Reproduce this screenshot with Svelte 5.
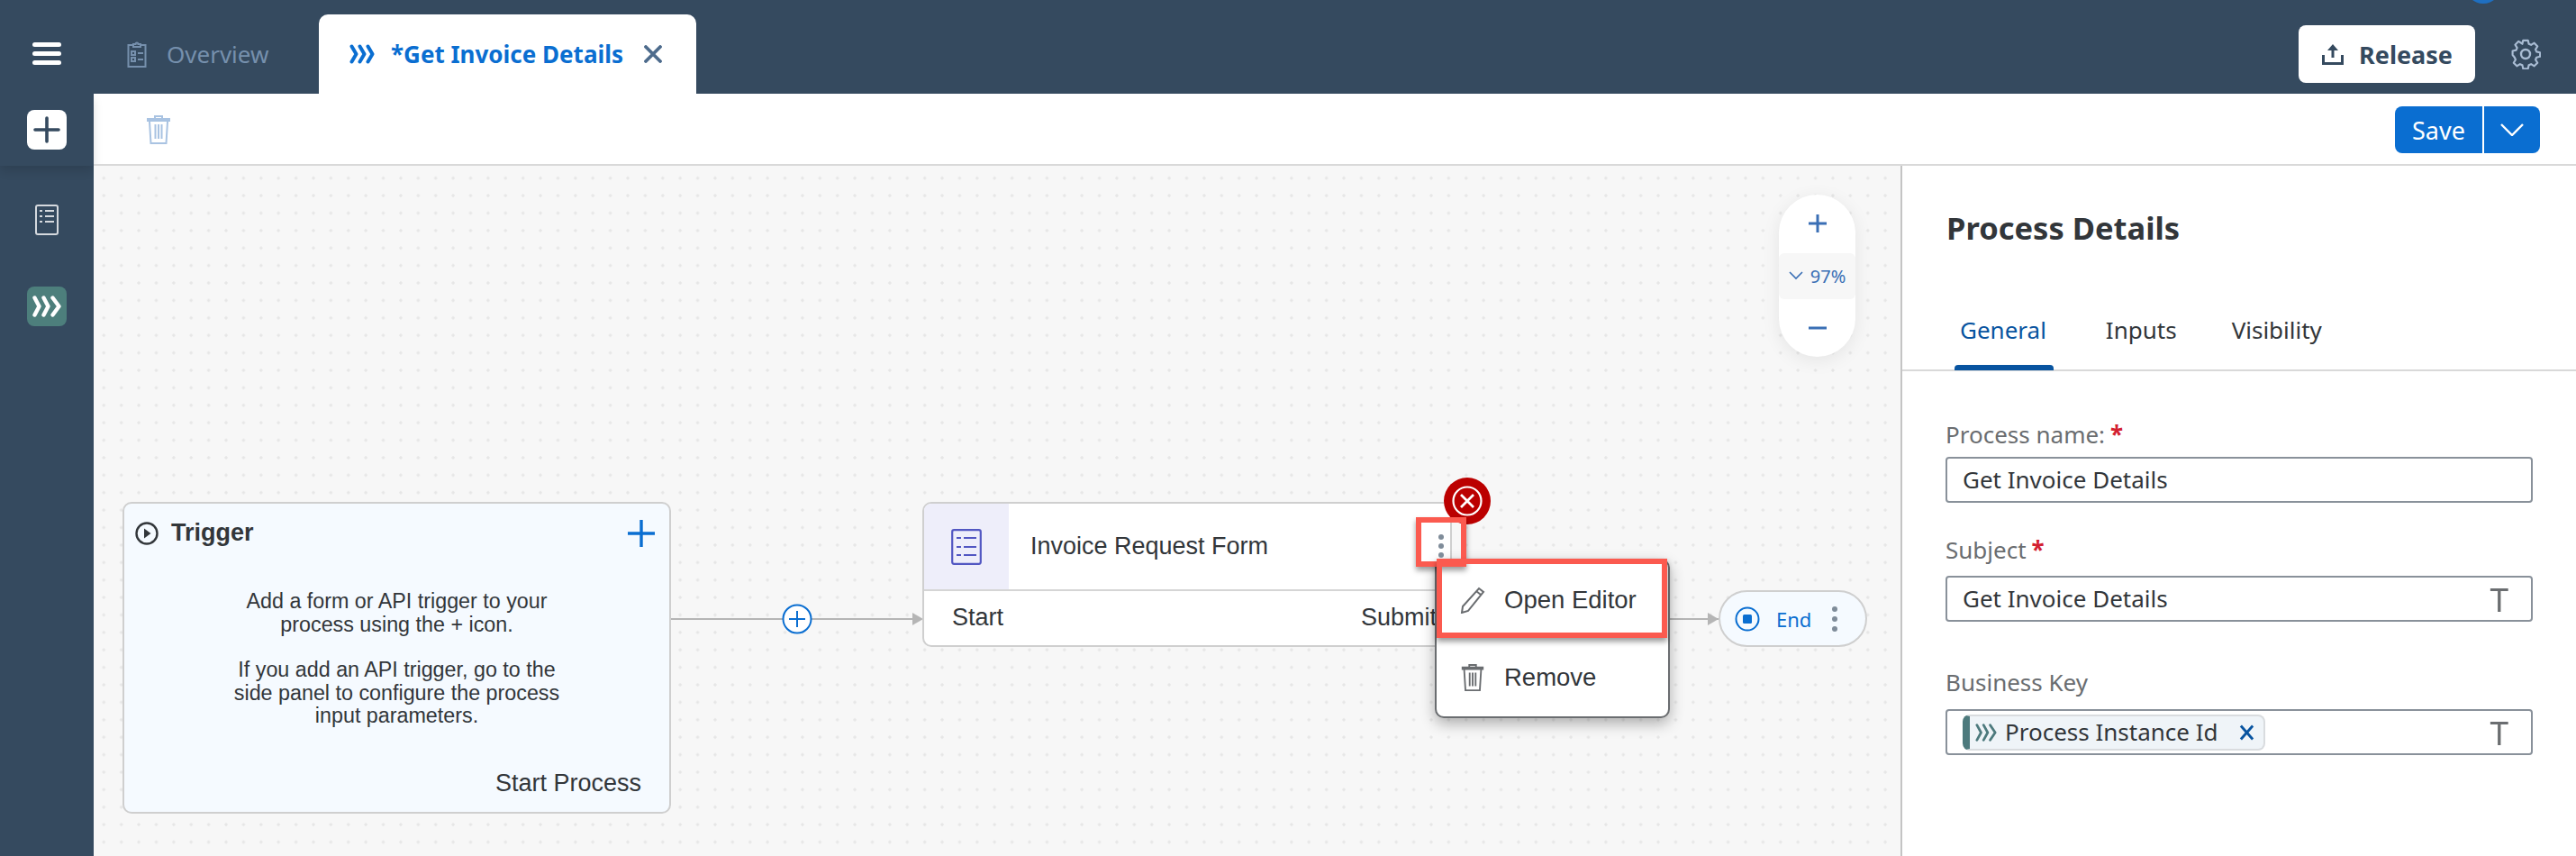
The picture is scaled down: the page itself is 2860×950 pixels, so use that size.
<script>
  let tabs = ['General', 'Inputs', 'Visibility'];
</script>

<div class="app">
  <header class="topbar">
    <button class="burger" aria-label="Menu"><span></span><span></span><span></span></button>
    <div class="tab">
      <svg class="ic-clip" viewBox="0 0 22 30" fill="none" stroke="#7690ad" stroke-width="2">
        <path d="M6 5H1.5v24h19V5H16M7 7V4h2.5a1.5 1.5 0 0 1 3 0H15v3z" />
        <path d="M5 12h4v4H5zM5 19h4v4H5zM12 14h6M12 21h6" />
      </svg>
      <span>Overview</span>
    </div>
    <div class="tab active">
      <svg class="ic-chev" viewBox="0 0 28 22" fill="none" stroke="#0a6ed1" stroke-width="4" stroke-linecap="round" stroke-linejoin="round">
        <path d="M2.500 2.500l5 8.500-5 8.500M11.500 2.500l5 8.500-5 8.500M20.500 2.500l5 8.500-5 8.500" />
      </svg>
      <span>*Get Invoice Details</span>
      <svg class="ic-close" viewBox="0 0 20 20" stroke="#4d6b8c" stroke-width="3.800" stroke-linecap="round">
        <path d="M2 2l16 16M18 2L2 18" />
      </svg>
    </div>
    <div class="top-right">
      <button class="release">
        <svg viewBox="0 0 26 24" fill="#354a5f">
          <path d="M13 1l6 7h-4.500v8h-3V8H7zM1 13h3v8h18v-8h3v11H1z" />
        </svg>
        Release
      </button>
      <svg class="gear" viewBox="0 0 34 34" fill="none" stroke="#a9bcd3" stroke-width="2.400" stroke-linejoin="round">
        <circle cx="17" cy="17" r="5" />
        <path d="M14 2h6l1 4.400 2.800 1.200 3.900-2.400 4 4.200-2.400 3.800 1.200 2.800 4.400 1v5l-4.400 1-1.200 2.800 2.400 3.900-4 4-3.900-2.400-2.800 1.200-1 4.400h-6l-1-4.400-2.800-1.200-3.900 2.400-4-4 2.400-3.900-1.200-2.800L1 20v-5l4.400-1 1.200-2.800-2.400-3.800 4-4.200 3.900 2.400L13 6.400z" transform="translate(1.700 0) scale(.9)" />
      </svg>
    </div>
  </header>

  <div class="body">
    <nav class="rail">
      <div class="rail-top">
        <button class="plus-btn" aria-label="Add">
          <svg viewBox="0 0 30 30" stroke="#354a5f" stroke-width="3.600" stroke-linecap="round"><path d="M15 2v26M2 15h26" /></svg>
        </button>
      </div>
      <svg class="ic-doc" viewBox="0 0 26 34" fill="none" stroke="#d5d9de" stroke-width="2">
        <rect x="1" y="1" width="24" height="32" rx="2" />
        <path d="M5 7h3M11 7h10M5 13h3M11 13h10M5 19h3M11 19h10" stroke-width="2.200" />
      </svg>
      <div class="proc-btn">
        <svg viewBox="0 0 32 24" fill="none" stroke="#fff" stroke-width="4.400" stroke-linecap="round" stroke-linejoin="round">
          <path d="M2.500 2.500l5 9.500-5 9.500M12.500 2.500l5 9.500-5 9.500M22.500 2.500l7 9.500-7 9.500" />
        </svg>
      </div>
    </nav>

    <main class="main">
      <div class="toolbar">
        <svg class="ic-trash" viewBox="0 0 28 32" fill="none" stroke="#a9c3e2" stroke-width="2">
          <path d="M1 6h26M1 4h26M10 3V1h8v2M4 7l1.500 24h17L24 7M10.500 10v16M14 10v16M17.500 10v16" />
        </svg>
        <div class="save">
          <button class="save-l">Save</button>
          <button class="save-r" aria-label="More">
            <svg viewBox="0 0 26 14" fill="none" stroke="#fff" stroke-width="2.400"><path d="M1 1l12 12L25 1" /></svg>
          </button>
        </div>
      </div>

      <div class="work">
        <section class="canvas">
          <!-- connectors -->
          <svg class="wires" width="2008" height="766" fill="none" stroke="#b5b5b5" stroke-width="2">
            <path d="M641 503H909" />
            <path d="M1750 503H1804" />
            <path d="M909 496l12 7-12 7z" fill="#b5b5b5" stroke="none" />
            <path d="M1792 496l12 7-12 7z" fill="#b5b5b5" stroke="none" />
          </svg>

          <div class="zoom-ctl">
            <button class="zoom-btn" aria-label="Zoom in">
              <svg viewBox="0 0 24 24" stroke="#3a6fb5" stroke-width="3"><path d="M12 2v20M2 12h20" /></svg>
            </button>
            <div class="zoom-val">
              <svg viewBox="0 0 16 10" fill="none" stroke="#3a6fb5" stroke-width="1.600"><path d="M1 1l7 7 7-7" /></svg>
              97%
            </div>
            <button class="zoom-btn" aria-label="Zoom out">
              <svg viewBox="0 0 24 24" stroke="#3a6fb5" stroke-width="3"><path d="M2 12h20" /></svg>
            </button>
          </div>

          <div class="trigger">
            <div class="trig-head">
              <svg viewBox="0 0 26 26" fill="none" stroke="#32363a" stroke-width="2.400">
                <circle cx="13" cy="13" r="11.500" />
                <path d="M10 7.500l7.500 5.500-7.500 5.500z" fill="#32363a" stroke="none" />
              </svg>
              <b>Trigger</b>
              <svg class="trig-plus" viewBox="0 0 30 30" stroke="#0a6ed1" stroke-width="3.400"><path d="M15 0v30M0 15h30" /></svg>
            </div>
            <p>Add a form or API trigger to your<br />process using the + icon.</p>
            <p>If you add an API trigger, go to the<br />side panel to configure the process<br />input parameters.</p>
            <div class="trig-foot">Start Process</div>
          </div>

          <div class="add-node">
            <svg viewBox="0 0 34 34" fill="#fff" stroke="#0a6ed1" stroke-width="2">
              <circle cx="17" cy="17" r="15.500" />
              <path d="M17 8v18M8 17h18" />
            </svg>
          </div>

          <div class="form-card">
            <div class="form-head">
              <div class="form-icon">
                <svg viewBox="0 0 34 40" fill="none" stroke="#5257c2" stroke-width="2.200">
                  <rect x="1.200" y="1.200" width="31.600" height="37.600" rx="2" />
                  <path d="M6 10h5M14 10h14M6 20h5M14 20h14M6 29h5M14 29h14" />
                </svg>
              </div>
              <span>Invoice Request Form</span>
            </div>
            <div class="form-foot"><span>Start</span><span class="submit">Submit</span></div>
          </div>

          <div class="err">
            <svg viewBox="0 0 34 34" fill="none" stroke="#fff" stroke-width="2.200">
              <circle cx="17" cy="17" r="15.500" />
              <path d="M10 10l14 14M24 10L10 24" stroke-width="2.800" />
            </svg>
          </div>

          <div class="menu">
            <div class="mi first">
              <svg viewBox="0 0 28 30" fill="none" stroke="#6a6d70" stroke-width="2">
                <path d="M21 2l5 4L9 27l-7 2 1-7zM18 5l5 4" />
              </svg>
              Open Editor
            </div>
            <div class="mi">
              <svg viewBox="0 0 28 32" fill="none" stroke="#6a6d70" stroke-width="2">
                <path d="M1 6h26M1 4h26M10 3V1h8v2M4 7l1.500 24h17L24 7M10.500 10v16M14 10v16M17.500 10v16" />
              </svg>
              Remove
            </div>
          </div>

          <div class="hl hl-dots">
            <i></i><i></i><i></i>
          </div>
          <div class="hl hl-item"></div>

          <div class="end-node">
            <svg viewBox="0 0 28 28" fill="none" stroke="#0a6ed1" stroke-width="2">
              <circle cx="14" cy="14" r="12.500" />
              <rect x="9" y="9" width="10" height="10" rx="1.500" fill="#0a6ed1" stroke="none" />
            </svg>
            <span>End</span>
            <div class="end-dots"><i></i><i></i><i></i></div>
          </div>
        </section>

        <aside class="panel">
          <h2>Process Details</h2>
          <div class="ptabs">
            {#each tabs as t, i}
              <div class="ptab" class:on={i === 0}>{t}</div>
            {/each}
          </div>
          <div class="fields">
            <label class="lbl first">Process name:<em>*</em></label>
            <div class="inp">Get Invoice Details</div>

            <label class="lbl second">Subject<em>*</em></label>
            <div class="inp">Get Invoice Details<span class="t-ic">T</span></div>

            <label class="lbl third">Business Key</label>
            <div class="inp tokenized">
              <div class="token">
                <svg viewBox="0 0 26 22" fill="none" stroke="#4d7a7d" stroke-width="3" stroke-linecap="round" stroke-linejoin="round">
                  <path d="M2 2l5 9-5 9M10 2l5 9-5 9M18 2l6 9-6 9" />
                </svg>
                <span>Process Instance Id</span>
                <svg class="tok-x" viewBox="0 0 18 18" stroke="#0854a0" stroke-width="3"><path d="M2 1l14 16M16 1L2 17" /></svg>
              </div>
              <span class="t-ic">T</span>
            </div>
          </div>
        </aside>
      </div>
    </main>
  </div>
</div>

<style>
  :global(body) {
    margin: 0;
    background: #fff;
  }
  .app {
    width: 2860px;
    height: 950px;
    overflow: hidden;
    display: flex;
    flex-direction: column;
    font-family: "Noto Sans", "Open Sans", sans-serif;
    color: #32363a;
    position: relative;
  }
  button {
    border: none;
    background: none;
    padding: 0;
    font: inherit;
  }
  svg {
    display: block;
    flex: none;
  }

  .topbar {
    height: 104px;
    background: #354a5f;
    display: flex;
    align-items: flex-end;
    position: relative;
    flex: none;
  }
  .topbar::after {
    content: "";
    position: absolute;
    width: 40px;
    height: 40px;
    border-radius: 50%;
    background: #1f6fc0;
    left: 2737px;
    top: -36px;
  }
  .burger {
    width: 104px;
    height: 88px;
    padding: 31px 36px 32px;
    box-sizing: border-box;
    display: flex;
    flex-direction: column;
    justify-content: space-between;
    flex: none;
  }
  .burger span {
    display: block;
    height: 5px;
    background: #fff;
    border-radius: 3px;
  }
  .tab {
    height: 88px;
    display: flex;
    align-items: center;
    box-sizing: border-box;
    padding: 0 0 0 37px;
    width: 250px;
    font-size: 26px;
    color: #7690ad;
    flex: none;
  }
  .ic-clip {
    width: 22px;
    height: 30px;
    margin-right: 22px;
  }
  .tab.active {
    width: 419px;
    padding: 0 0 0 34px;
    background: #fff;
    border-radius: 10px 10px 0 0;
    color: #0a6ed1;
    font-weight: 700;
  }
  .ic-chev {
    width: 28px;
    height: 22px;
    margin-right: 18px;
  }
  .ic-close {
    width: 20px;
    height: 20px;
    margin-left: 23px;
  }
  .top-right {
    margin-left: auto;
    height: 104px;
    display: flex;
    align-items: center;
    padding: 16px 39px 0 0;
    box-sizing: border-box;
    gap: 39px;
  }
  .release {
    width: 196px;
    height: 64px;
    background: #fff;
    border-radius: 8px;
    display: flex;
    align-items: center;
    justify-content: center;
    gap: 16px;
    font-size: 27px;
    font-weight: 700;
    color: #354a5f;
  }
  .release svg {
    width: 26px;
    height: 24px;
  }
  .gear {
    width: 34px;
    height: 34px;
  }

  .body {
    flex: 1;
    display: flex;
    min-height: 0;
  }
  .rail {
    width: 104px;
    flex: none;
    background: #354a5f;
    display: flex;
    flex-direction: column;
    align-items: center;
  }
  .rail-top {
    width: 100%;
    height: 80px;
    padding-top: 18px;
    box-sizing: border-box;
    display: flex;
    justify-content: center;
    box-shadow: 0 6px 10px rgba(0, 0, 0, 0.12);
  }
  .plus-btn {
    width: 44px;
    height: 44px;
    background: #fff;
    border-radius: 8px;
    display: flex;
    align-items: center;
    justify-content: center;
  }
  .plus-btn svg {
    width: 30px;
    height: 30px;
  }
  .ic-doc {
    width: 26px;
    height: 34px;
    margin-top: 43px;
  }
  .proc-btn {
    width: 44px;
    height: 44px;
    margin-top: 57px;
    background: #4d7f7c;
    border-radius: 8px;
    display: flex;
    align-items: center;
    justify-content: center;
  }
  .proc-btn svg {
    width: 32px;
    height: 24px;
  }

  .main {
    flex: 1;
    display: flex;
    flex-direction: column;
    min-width: 0;
  }
  .toolbar {
    height: 80px;
    box-sizing: border-box;
    border-bottom: 2px solid #d9d9d9;
    display: flex;
    align-items: flex-start;
    justify-content: space-between;
    padding: 14px 40px 0 58px;
    flex: none;
  }
  .ic-trash {
    width: 28px;
    height: 32px;
    margin-top: 10px;
  }
  .save {
    display: flex;
    gap: 2px;
    height: 52px;
  }
  .save-l {
    width: 97px;
    background: #0a6ed1;
    color: #fff;
    font-size: 27px;
    font-weight: 400;
    border-radius: 8px 0 0 8px;
  }
  .save-r {
    width: 62px;
    background: #0a6ed1;
    border-radius: 0 8px 8px 0;
    display: flex;
    align-items: center;
    justify-content: center;
  }
  .save-r svg {
    width: 26px;
    height: 14px;
  }

  .work {
    flex: 1;
    display: flex;
    min-height: 0;
  }
  .canvas {
    flex: 1;
    position: relative;
    background-color: #f7f7f7;
    background-image: radial-gradient(circle, #e6e6e6 1.500px, transparent 1.600px);
    background-size: 19.400px 19.400px;
    background-position: 1.600px 4px;
    font-family: "Liberation Sans", Arial, sans-serif;
    overflow: hidden;
  }
  .wires {
    position: absolute;
    left: 0;
    top: 0;
  }

  .zoom-ctl {
    position: absolute;
    left: 1871px;
    top: 32px;
    width: 85px;
    height: 180px;
    border-radius: 43px;
    background: #fff;
    box-shadow: 0 4px 20px rgba(0, 0, 0, 0.08);
    display: flex;
    flex-direction: column;
    font-family: "Noto Sans", sans-serif;
  }
  .zoom-btn {
    flex: 1;
    display: flex;
    align-items: center;
    justify-content: center;
  }
  .zoom-btn svg {
    width: 24px;
    height: 24px;
  }
  .zoom-val {
    height: 51px;
    background: #f7f7f7;
    border-radius: 6px;
    display: flex;
    align-items: center;
    justify-content: center;
    gap: 8px;
    font-size: 20px;
    color: #3a6fb5;
  }
  .zoom-val svg {
    width: 16px;
    height: 10px;
  }

  .trigger {
    position: absolute;
    left: 32px;
    top: 373px;
    width: 609px;
    height: 346px;
    box-sizing: border-box;
    background: #f5faff;
    border: 2px solid #cfcfcf;
    border-radius: 10px;
    text-align: center;
    font-size: 23.300px;
    line-height: 25.500px;
  }
  .trig-head {
    display: flex;
    align-items: center;
    height: 30px;
    padding: 18px 16px 0 12px;
    gap: 14px;
    font-size: 27px;
  }
  .trig-head svg {
    width: 26px;
    height: 26px;
  }
  .trig-head .trig-plus {
    width: 30px;
    height: 30px;
    margin-left: auto;
  }
  .trigger p {
    margin: 0;
    padding-top: 25px;
  }
  .trigger p:first-of-type {
    padding-top: 48px;
  }
  .trig-foot {
    position: absolute;
    right: 31px;
    bottom: 17px;
    font-size: 27px;
    line-height: 30px;
  }

  .add-node {
    position: absolute;
    left: 764px;
    top: 486px;
    width: 34px;
    height: 34px;
  }

  .form-card {
    position: absolute;
    left: 920px;
    top: 373px;
    width: 588px;
    height: 161px;
    box-sizing: border-box;
    border: 2px solid #cfcfcf;
    border-radius: 10px;
    background: #fff;
    font-size: 27px;
    overflow: hidden;
  }
  .form-head {
    height: 95px;
    display: flex;
    align-items: center;
    border-bottom: 2px solid #d5d5d5;
  }
  .form-icon {
    width: 94px;
    height: 100%;
    background: #eeeefa;
    display: flex;
    align-items: center;
    justify-content: center;
    margin-right: 24px;
  }
  .form-icon svg {
    width: 34px;
    height: 40px;
  }
  .form-foot {
    display: flex;
    justify-content: space-between;
    padding: 14px 0 0 31px;
    height: 40px;
  }
  .submit {
    margin-right: 15px;
  }

  .err {
    position: absolute;
    left: 1499px;
    top: 346px;
    width: 52px;
    height: 52px;
    border-radius: 50%;
    background: #bb0000;
    display: flex;
    align-items: center;
    justify-content: center;
  }
  .err svg {
    width: 34px;
    height: 34px;
  }

  .menu {
    position: absolute;
    left: 1489px;
    top: 436px;
    width: 261px;
    height: 177px;
    box-sizing: border-box;
    border: 2px solid #6a6d70;
    border-radius: 10px;
    background: #fff;
    box-shadow: 0 6px 16px rgba(0, 0, 0, 0.3);
    font-size: 27.500px;
    display: flex;
    flex-direction: column;
    padding-left: 26px;
  }
  .mi {
    height: 87px;
    display: flex;
    align-items: center;
    gap: 21px;
  }
  .mi.first {
    height: 90px;
  }
  .mi svg {
    width: 28px;
    height: 30px;
  }

  .hl {
    position: absolute;
    box-sizing: border-box;
    border: 6px solid #fb5a4f;
    box-shadow: 0 4px 6px rgba(0, 0, 0, 0.4);
  }
  .hl-dots {
    left: 1468px;
    top: 390px;
    width: 56px;
    height: 55px;
    display: flex;
    flex-direction: column;
    align-items: center;
    justify-content: flex-start;
    gap: 4px;
    padding-top: 13px;
  }
  .hl-dots i,
  .end-dots i {
    width: 6px;
    height: 6px;
    border-radius: 50%;
    background: #7f8c99;
    display: block;
  }
  .hl-item {
    left: 1491px;
    top: 436px;
    width: 256px;
    height: 88px;
  }

  .end-node {
    position: absolute;
    left: 1804px;
    top: 471px;
    width: 165px;
    height: 63px;
    box-sizing: border-box;
    border: 2px solid #cfcfcf;
    border-radius: 32px;
    background: #f5faff;
    display: flex;
    align-items: center;
    padding-left: 16px;
    color: #0a6ed1;
    font-size: 22px;
    font-family: "Noto Sans", sans-serif;
  }
  .end-node svg {
    width: 28px;
    height: 28px;
    margin-right: 18px;
  }
  .end-dots {
    display: flex;
    flex-direction: column;
    gap: 5px;
    margin-left: 23px;
  }

  .panel {
    width: 750px;
    flex: none;
    box-sizing: border-box;
    border-left: 2px solid #c4c4c4;
    background: #fff;
    overflow: hidden;
  }
  .panel h2 {
    margin: 0;
    box-sizing: border-box;
    padding: 49px 0 0 49px;
    font-size: 34.500px;
    line-height: 40px;
    font-weight: 700;
    height: 90px;
  }
  .ptabs {
    display: flex;
    height: 138px;
    box-sizing: border-box;
    border-bottom: 2px solid #d9d9d9;
    padding: 0 0 0 64px;
    font-size: 26px;
    align-items: flex-end;
    gap: 66px;
    color: #32363a;
  }
  .ptab {
    height: 72px;
    line-height: 56px;
    position: relative;
  }
  .ptab:last-child {
    margin-left: -5px;
  }
  .ptab.on {
    color: #0854a0;
  }
  .ptab.on::after {
    content: "";
    position: absolute;
    left: -6px;
    right: -8px;
    bottom: -1px;
    height: 6px;
    background: #0854a0;
    border-radius: 4px 4px 0 0;
  }
  .fields {
    padding: 0 48px 0 48px;
    display: flex;
    flex-direction: column;
  }
  .lbl {
    font-size: 26px;
    line-height: 34px;
    color: #6a6d70;
    display: block;
  }
  .lbl em {
    color: #d32030;
    font-style: normal;
    font-weight: 700;
    margin-left: 6px;
  }
  .lbl.first {
    margin-top: 53px;
    margin-bottom: 8px;
  }
  .lbl.second {
    margin-top: 35px;
    margin-bottom: 12px;
  }
  .lbl.third {
    margin-top: 50px;
    margin-bottom: 13px;
  }
  .inp {
    height: 51px;
    box-sizing: border-box;
    border: 2px solid #89919a;
    border-radius: 4px;
    padding-left: 17px;
    font-size: 26px;
    line-height: 47px;
    position: relative;
    display: flex;
    align-items: center;
  }
  .t-ic {
    position: absolute;
    right: 25px;
    top: 4px;
    font-family: "Roboto", sans-serif;
    font-weight: 400;
    font-size: 36px;
    line-height: 44px;
    color: #6a6d70;
    will-change: transform;
  }
  .token {
    width: 336px;
    height: 40px;
    box-sizing: border-box;
    border: 2px solid #d9dcdf;
    border-left: 8px solid #4d7a7d;
    border-radius: 8px;
    background: #eff4f8;
    display: flex;
    align-items: center;
    font-size: 26px;
  }
  .token svg {
    width: 24px;
    height: 22px;
    margin: 0 0 0 6px;
  }
  .token span {
    margin-left: 9px;
  }
  .token .tok-x {
    width: 17px;
    height: 18px;
    margin-left: auto;
    margin-right: 10px;
  }
</style>
